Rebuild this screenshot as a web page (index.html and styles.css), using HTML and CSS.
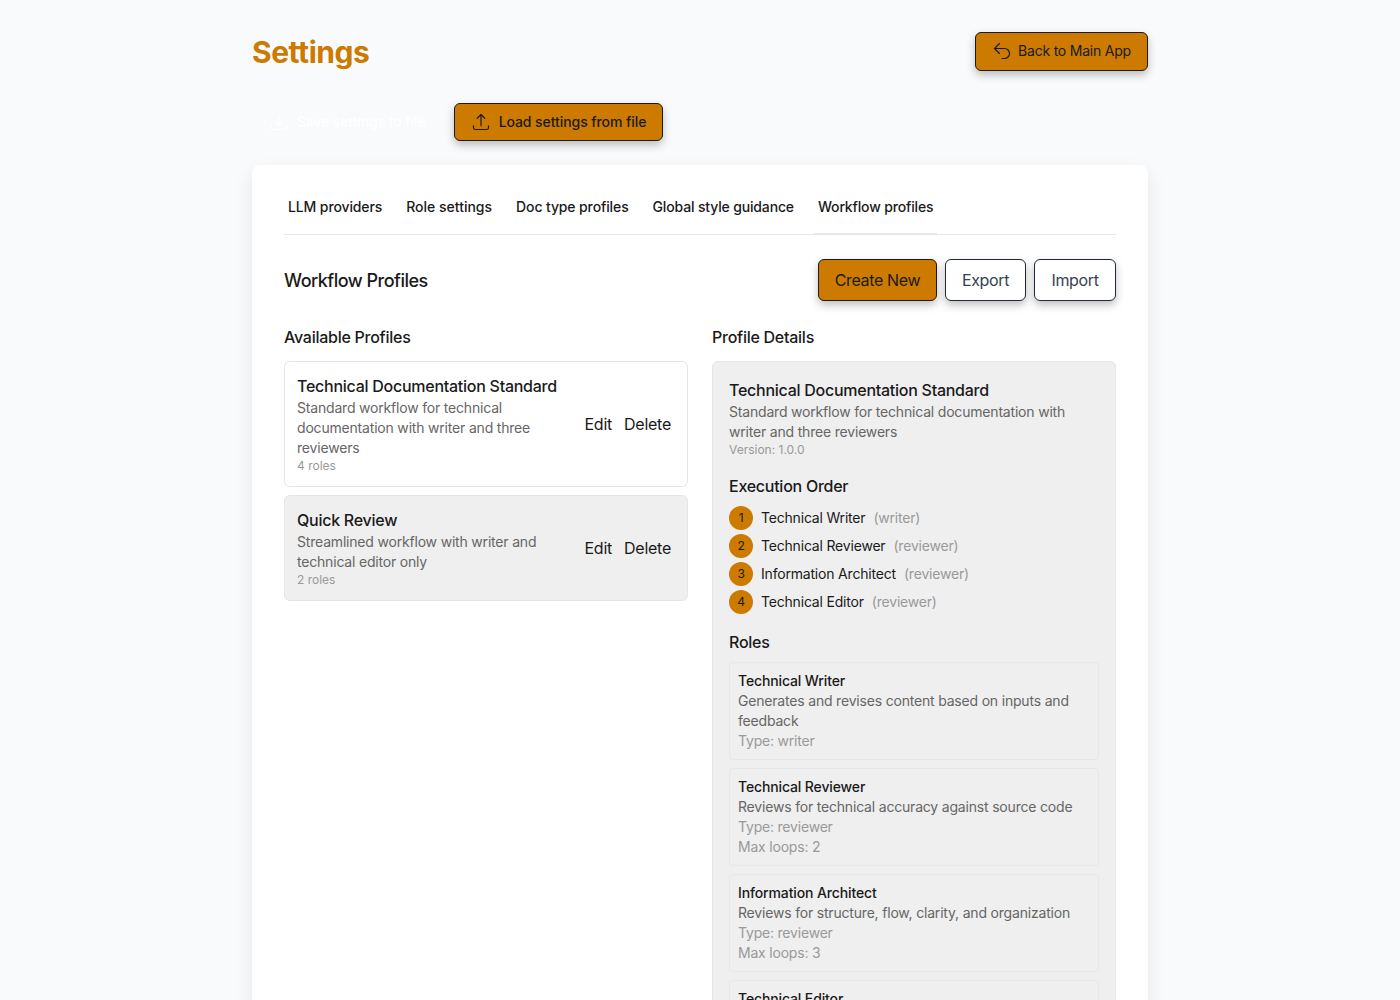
FILE: index.html
```html
<!DOCTYPE html>
<html lang="en">
<head>
<meta charset="utf-8">
<title>Settings</title>
<link rel="stylesheet" href="styles.css">
</head>
<body>
<div class="page">
  <header class="page-header">
    <h1 class="page-title">Settings</h1>
    <button class="btn btn-primary btn-back">
      <svg class="icon" viewBox="0 0 24 24"><path d="M9 15 3 9m0 0 6-6M3 9h12a6 6 0 0 1 0 12h-3"/></svg>
      <span>Back to Main App</span>
    </button>
  </header>

  <div class="file-actions">
    <button class="btn btn-file btn-ghost">
      <svg class="icon" viewBox="0 0 24 24"><path d="M3 16.5v2.25A2.25 2.25 0 0 0 5.25 21h13.5A2.25 2.25 0 0 0 21 18.75V16.5M16.5 12 12 16.5m0 0L7.5 12m4.5 4.5V3"/></svg>
      <span>Save settings to file</span>
    </button>
    <button class="btn btn-file btn-primary">
      <svg class="icon" viewBox="0 0 24 24"><path d="M3 16.5v2.25A2.25 2.25 0 0 0 5.25 21h13.5A2.25 2.25 0 0 0 21 18.75V16.5m-13.5-9L12 3m0 0 4.5 4.5M12 3v13.5"/></svg>
      <span>Load settings from file</span>
    </button>
  </div>

  <main class="panel">
    <nav class="tabs">
      <a class="tab">LLM providers</a>
      <a class="tab tab-loose">Role settings</a>
      <a class="tab">Doc type profiles</a>
      <a class="tab tab-tight">Global style guidance</a>
      <a class="tab tab-tight tab-active">Workflow profiles</a>
    </nav>

    <div class="section-header">
      <h2 class="section-title">Workflow Profiles</h2>
      <div class="section-actions">
        <button class="btn btn-large btn-primary btn-create">Create New</button>
        <button class="btn btn-large btn-outline btn-export">Export</button>
        <button class="btn btn-large btn-outline">Import</button>
      </div>
    </div>

    <div class="columns">
      <section>
        <h3 class="heading column-heading">Available Profiles</h3>
        <div class="stack">
          <article class="profile">
            <div class="profile-info">
              <div class="heading">Technical Documentation Standard</div>
              <div class="description">Standard workflow for technical documentation with writer and three reviewers</div>
              <div class="meta">4 roles</div>
            </div>
            <div class="profile-actions"><button class="link">Edit</button><button class="link">Delete</button></div>
          </article>
          <article class="profile profile-muted">
            <div class="profile-info">
              <div class="heading">Quick Review</div>
              <div class="description">Streamlined workflow with writer and technical editor only</div>
              <div class="meta">2 roles</div>
            </div>
            <div class="profile-actions"><button class="link">Edit</button><button class="link">Delete</button></div>
          </article>
        </div>
      </section>

      <section>
        <h3 class="heading column-heading">Profile Details</h3>
        <div class="details">
          <div>
            <div class="heading">Technical Documentation Standard</div>
            <div class="description">Standard workflow for technical documentation with writer and three reviewers</div>
            <div class="meta">Version: 1.0.0</div>
          </div>
          <div>
            <h4 class="heading group-heading">Execution Order</h4>
            <ol class="steps">
              <li class="step"><span class="step-number">1</span><span>Technical Writer</span><span class="faint">(writer)</span></li>
              <li class="step"><span class="step-number">2</span><span>Technical Reviewer</span><span class="faint">(reviewer)</span></li>
              <li class="step"><span class="step-number">3</span><span>Information Architect</span><span class="faint">(reviewer)</span></li>
              <li class="step"><span class="step-number">4</span><span>Technical Editor</span><span class="faint">(reviewer)</span></li>
            </ol>
          </div>
          <div>
            <h4 class="heading group-heading">Roles</h4>
            <div class="stack">
              <div class="role">
                <div class="role-name">Technical Writer</div>
                <div class="description">Generates and revises content based on inputs and feedback</div>
                <div class="faint">Type: writer</div>
              </div>
              <div class="role">
                <div class="role-name">Technical Reviewer</div>
                <div class="description">Reviews for technical accuracy against source code</div>
                <div class="faint">Type: reviewer</div>
                <div class="faint">Max loops: 2</div>
              </div>
              <div class="role">
                <div class="role-name">Information Architect</div>
                <div class="description">Reviews for structure, flow, clarity, and organization</div>
                <div class="faint">Type: reviewer</div>
                <div class="faint">Max loops: 3</div>
              </div>
              <div class="role">
                <div class="role-name">Technical Editor</div>
              </div>
            </div>
          </div>
        </div>
      </section>
    </div>
  </main>
</div>
</body>
</html>
```
FILE: styles.css
```css
*, *::before, *::after { box-sizing: border-box; }
html { scrollbar-width: none; }
body {
  margin: 0;
  background: #f8fafc;
  color: #1a1a1a;
  font-family: Inter, "Liberation Sans", sans-serif;
  font-size: 16px;
  line-height: 24px;
}
h1, h2, h3, h4, ol { margin: 0; padding: 0; }
button { font: inherit; color: inherit; letter-spacing: inherit; background: none; border: 0; padding: 0; margin: 0; }

.page { width: 896px; margin: 0 auto; padding: 32px 0; }
.page-header { display: flex; justify-content: space-between; align-items: center; height: 39px; margin-bottom: 32px; }
.page-title { color: #cc7a00; font-size: 30px; line-height: 36px; font-weight: 700; letter-spacing: -0.45px; padding-top: 1px; }

.btn { display: inline-flex; align-items: center; justify-content: center; border: 1px solid transparent; border-radius: 6px; white-space: nowrap; }
.btn-primary, .btn-outline { box-shadow: 0 4px 8px rgba(0, 0, 0, .25); }
.btn-primary { background: #cc7a00; border-color: #1a1a1a; color: #1a1a1a; }
.btn-outline { background: #fff; border-color: #1f2937; color: #374151; }
.btn-back { width: 173px; height: 39px; gap: 6px; padding-bottom: 1px; font-size: 14px; line-height: 20px; letter-spacing: -0.22px; }
.btn-file { width: 209px; height: 38px; gap: 8px; font-size: 14px; line-height: 20px; font-weight: 500; letter-spacing: -0.07px; }
.btn-ghost { width: 190px; color: #fff; font-weight: 600; letter-spacing: -0.17px; }
.btn-large { width: 82px; height: 42px; letter-spacing: -0.35px; }
.btn-create { width: 119px; }
.btn-export { width: 81px; }
.icon { flex: none; width: 20px; height: 20px; fill: none; stroke: currentColor; stroke-width: 1.4; stroke-linecap: round; stroke-linejoin: round; }

.file-actions { display: flex; gap: 12px; margin-bottom: 24px; }

.panel { background: #fff; border-radius: 8px; padding: 32px; box-shadow: 0 8px 20px rgba(0, 0, 0, .08); }
.tabs { display: flex; gap: 16px; border-bottom: 1px solid #e5e7eb; }
.tab { padding: 0 4px 16px; margin-bottom: -1px; border-bottom: 2px solid transparent; font-size: 14px; line-height: 20px; font-weight: 500; letter-spacing: -0.12px; }
.tab-loose { letter-spacing: 0; }
.tab-tight { letter-spacing: -0.155px; }
.tab-active { border-color: #e5e7eb; }

.section-header { display: flex; justify-content: space-between; align-items: center; margin: 24px 0; }
.section-title { font-size: 18px; line-height: 28px; font-weight: 500; letter-spacing: -0.5px; padding-top: 1px; }
.section-actions { display: flex; gap: 8px; }

.columns { display: grid; grid-template-columns: 1fr 1fr; gap: 24px; }
.heading { font-size: 16px; line-height: 24px; font-weight: 500; letter-spacing: -0.26px; }
.column-heading { margin-bottom: 12px; }
.group-heading { margin-bottom: 8px; }
.description { color: #666; font-size: 14px; line-height: 20px; letter-spacing: -0.19px; }
.meta { color: #999; font-size: 12px; line-height: 16px; }
.faint { color: #999; font-size: 14px; line-height: 20px; letter-spacing: -0.2px; }
.stack { display: flex; flex-direction: column; gap: 8px; }

.profile { display: flex; justify-content: space-between; align-items: center; padding: 12px; border: 1px solid #e5e5e5; border-radius: 6px; }
.profile-muted { background: #efefef; }
.profile-info { width: 275px; }
.profile-actions { display: flex; gap: 4px; }
.link { padding: 0 4px; letter-spacing: -0.25px; }

.details { display: flex; flex-direction: column; gap: 16px; padding: 16px; background: #efefef; border: 1px solid #e5e5e5; border-radius: 6px; }
.steps { display: flex; flex-direction: column; gap: 4px; list-style: none; }
.step { display: flex; align-items: center; gap: 8px; font-size: 14px; line-height: 20px; letter-spacing: -0.19px; }
.step-number { display: flex; align-items: center; justify-content: center; width: 24px; height: 24px; border-radius: 50%; background: #cc7a00; font-size: 12px; line-height: 16px; }
.role { padding: 8px; border: 1px solid #e5e7eb; border-radius: 4px; font-size: 14px; line-height: 20px; }
.role-name { font-weight: 500; letter-spacing: -0.13px; }
```
